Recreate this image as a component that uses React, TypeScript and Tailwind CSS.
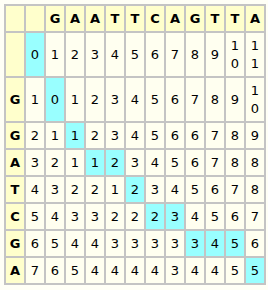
import React from "react";

const top = ["G", "A", "A", "T", "T", "C", "A", "G", "T", "T", "A"];

const rows: { label: string; vals: number[]; hl: number[] }[] = [
  { label: "", vals: [0, 1, 2, 3, 4, 5, 6, 7, 8, 9, 10, 11], hl: [0] },
  { label: "G", vals: [1, 0, 1, 2, 3, 4, 5, 6, 7, 8, 9, 10], hl: [1] },
  { label: "G", vals: [2, 1, 1, 2, 3, 4, 5, 6, 6, 7, 8, 9], hl: [2] },
  { label: "A", vals: [3, 2, 1, 1, 2, 3, 4, 5, 6, 7, 8, 8], hl: [3, 4] },
  { label: "T", vals: [4, 3, 2, 2, 1, 2, 3, 4, 5, 6, 7, 8], hl: [5] },
  { label: "C", vals: [5, 4, 3, 3, 2, 2, 2, 3, 4, 5, 6, 7], hl: [6, 7] },
  { label: "G", vals: [6, 5, 4, 4, 3, 3, 3, 3, 3, 4, 5, 6], hl: [8, 9, 10] },
  { label: "A", vals: [7, 6, 5, 4, 4, 4, 4, 3, 4, 4, 5, 5], hl: [11] },
];

function Num({ v }: { v: number }) {
  const s = String(v);
  if (s.length === 1) return <>{s}</>;
  return (
    <>
      {s[0]}
      <br />
      {s.slice(1)}
    </>
  );
}

export default function App() {
  const head = "border-2 border-[#c4c4c4] bg-[#ffffcc] font-bold text-center align-middle pt-[4px] pb-[3px] px-0";
  const cell = "border-2 border-[#c4c4c4] text-center align-middle pt-[4px] pb-[3px] px-0";
  return (
    <div
      className="w-[268px] h-[290px] bg-[#fffff6] text-black overflow-hidden"
      style={{ fontFamily: '"DejaVu Sans", Verdana, sans-serif' }}
    >
      <div className="h-[4px] overflow-hidden relative">
        <div className="absolute left-[118px] bottom-[1px] text-[12px] leading-[14px] whitespace-nowrap">
          Edit Distance
        </div>
      </div>
      <table className="ml-[4px] w-[260px] table-fixed border-collapse text-[13px] leading-[18px]">
        <colgroup>
          {Array.from({ length: 13 }).map((_, i) => (
            <col key={i} className="w-[20px]" />
          ))}
        </colgroup>
        <tbody>
          <tr>
            <td className={head}>&nbsp;</td>
            <td className={head}>&nbsp;</td>
            {top.map((c, i) => (
              <td key={i} className={head}>
                {c}
              </td>
            ))}
          </tr>
          {rows.map((r, ri) => (
            <tr key={ri}>
              <td className={head}>{r.label || "\u00a0"}</td>
              {r.vals.map((v, ci) => (
                <td
                  key={ci}
                  className={
                    cell + " " + (r.hl.includes(ci) ? "bg-[#99ffff]" : "bg-[#fffff0]")
                  }
                >
                  <Num v={v} />
                </td>
              ))}
            </tr>
          ))}
        </tbody>
      </table>
    </div>
  );
}
